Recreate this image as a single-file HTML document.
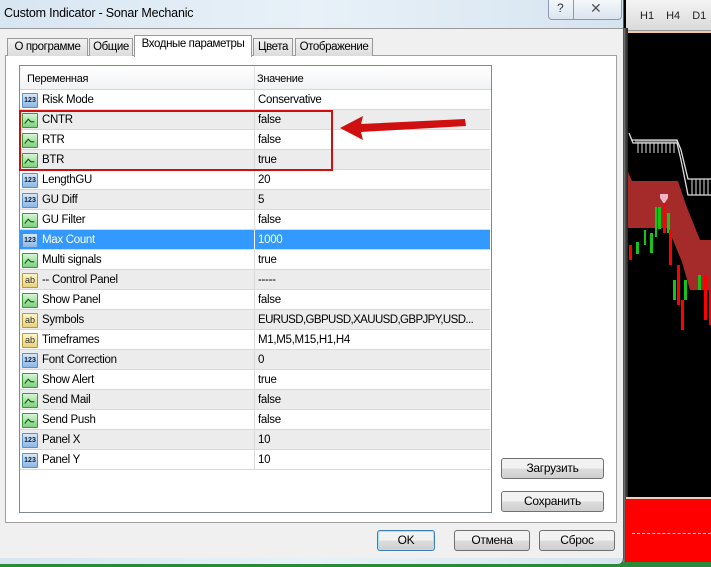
<!DOCTYPE html>
<html><head><meta charset="utf-8"><style>
*{margin:0;padding:0;box-sizing:border-box}
body{width:711px;height:567px;overflow:hidden;position:relative;background:#000;font-family:"Liberation Sans",sans-serif;font-size:12px;color:#000}
.a{position:absolute}
.tab{position:absolute;top:38px;height:18px;border:1px solid #999;border-bottom:none;background:linear-gradient(#f2f2f2,#dcdcdc);font-size:11.5px;line-height:17px;text-align:center;letter-spacing:-0.4px}
.row{position:absolute;left:20px;width:470px;height:20px;border-bottom:1px solid #d9d9d9;line-height:21px;font-size:11.5px;letter-spacing:-0.3px;white-space:nowrap}
.row .n{position:absolute;left:22px;top:0}
.row .v{position:absolute;left:238px;top:0}
.row .d{position:absolute;left:234px;top:0;width:1px;height:20px;background:#d9d9d9}
.g{background:#ececec}
.w{background:#fff}
.sel{background:#3399ff;color:#fff}
.ic{position:absolute;left:2px;top:3px;width:16px;height:15px;border-radius:1px}
.i1{background:linear-gradient(#d8e8f8,#8ab6e6);border:1px solid #5b8fc9;font-size:7px;line-height:13px;color:#123;text-align:center;font-weight:bold;letter-spacing:0}
.i2{background:linear-gradient(#d6f5d6,#7fd07f);border:1px solid #3a9a3a}
.i3{background:linear-gradient(#fff6c8,#e8d27a);border:1px solid #b39a3a;font-size:9px;line-height:13px;text-align:center;color:#333;letter-spacing:0}
.btn{position:absolute;border:1px solid #707070;border-radius:3px;background:linear-gradient(#f2f2f2 50%,#dddddd 50%,#cfcfcf);text-align:center;font-size:12px;letter-spacing:-0.3px}
</style></head><body>
<!-- chart -->
<div class="a" style="left:626px;top:0;width:85px;height:31px;background:linear-gradient(#f4f4f4,#dadada);border-bottom:1px solid #999"></div>
<div class="a" style="left:640px;top:10px;font-size:11px;color:#222;word-spacing:9px">H1 H4 D1</div>
<div class="a" style="left:627px;top:31px;width:84px;height:2px;background:#f7c9a0"></div>
<div class="a" style="left:620px;top:28px;width:8px;height:539px;background:linear-gradient(90deg,#fff,#999 40%,#444 70%,#222)"></div>
<svg class="a" style="left:626px;top:0" width="85" height="497">
<polygon points="2,172 6,181 52,181 60,205 74,240 85,240 85,290 64,290 56,262 42,228 2,228" fill="#a52a2a"/>
<path d="M3,133 L7,143 L51,143 L55,160 L62,195 L85,195" stroke="#ddd" stroke-width="1.3" fill="none"/>
<path d="M5,140 L51,140 L55,150 L62,179 L85,179" stroke="#ddd" stroke-width="1.3" fill="none"/>
<g stroke="#ddd" stroke-width="1"><path d="M10,140v3M14,140v3M18,140v3M22,140v3M26,140v3M30,140v3M34,140v3M38,140v3M42,140v3M46,140v3M50,140v3"/>
<path d="M12,140v13M16,140v13M20,140v13M24,140v13M28,140v13M32,140v13M36,140v13M40,140v13M44,140v13M48,140v13M66,179v16M70,179v16M74,179v16M78,179v16M82,179v16"/></g>
<polygon points="34,194 42,194 42,198 38,204 34,198" fill="#f4b3c2"/>
<g fill="#19c219"><rect x="29" y="207" width="2" height="30"/><rect x="32" y="207" width="3" height="22"/><rect x="24" y="233" width="3" height="20"/><rect x="10" y="242" width="3" height="12"/><rect x="18" y="230" width="2" height="15"/><rect x="41" y="213" width="3" height="20"/><rect x="47" y="280" width="3" height="20"/><rect x="72" y="275" width="3" height="15"/><rect x="58" y="280" width="3" height="20"/></g>
<g fill="#f00"><rect x="37" y="203" width="3" height="30"/><rect x="43" y="230" width="3" height="35"/><rect x="51" y="265" width="3" height="40"/><rect x="3" y="245" width="3" height="15"/><rect x="78" y="275" width="3" height="45"/><rect x="83" y="290" width="2" height="35"/><rect x="55" y="300" width="3" height="30"/></g>
</svg>
<div class="a" style="left:626px;top:497px;width:85px;height:2px;background:#f0d0c0"></div>
<div class="a" style="left:626px;top:499px;width:85px;height:64px;background:#f00"></div>
<div class="a" style="left:632px;top:533px;width:79px;border-top:1px dashed #ff0"></div>
<div class="a" style="left:0;top:562px;width:711px;height:5px;background:#2a8a3a"></div>
<!-- dialog -->
<div class="a" style="left:0;top:0;width:624px;height:564px;background:linear-gradient(90deg,#d8e6f2,#e8f1f8 50%,#d6e4f0);border-right:1px solid #555;border-radius:0 0 6px 0"></div>
<div class="a" style="left:4px;top:6px;font-size:12.5px;color:#000;letter-spacing:-0.2px">Custom Indicator - Sonar Mechanic</div>
<div class="a" style="left:548px;top:0;width:74px;height:20px;border:1px solid #8a9bb0;border-top:none;border-radius:0 0 4px 4px;background:linear-gradient(#f4f8fb,#dbe5ef)"></div>
<div class="a" style="left:573px;top:0;width:1px;height:20px;background:#8a9bb0"></div>
<div class="a" style="left:557px;top:1px;font-size:12px;color:#333">?</div>
<div class="a" style="left:590px;top:0px;font-size:14px;color:#555">✕</div>
<div class="a" style="left:0;top:28px;width:623px;height:530px;background:#f0f0f0;border-top:1px solid #999"></div>
<div class="a" style="left:5px;top:55px;width:612px;height:468px;background:#fff;border:1px solid #a0a0a0"></div>
<div class="tab" style="left:7px;width:81px">О программе</div>
<div class="tab" style="left:89px;width:44px">Общие</div>
<div class="tab" style="left:134px;top:35px;width:118px;height:22px;background:#fff;border-color:#999;z-index:2">Входные параметры</div>
<div class="tab" style="left:253px;width:40px">Цвета</div>
<div class="tab" style="left:295px;width:78px">Отображение</div>
<div class="a" style="left:19px;top:65px;width:473px;height:448px;border:1px solid #828790;background:#fff"></div>
<div class="a" style="left:20px;top:66px;width:471px;height:24px;background:linear-gradient(#fff,#f1f2f4);border-bottom:1px solid #d5d5d5;font-size:11px;line-height:26px;letter-spacing:-0.3px"><span style="position:absolute;left:7px">Переменная</span><span style="position:absolute;left:237px">Значение</span><span style="position:absolute;left:234px;top:0;width:1px;height:24px;background:#e3e3e3"></span></div>

<svg width="0" height="0" style="position:absolute"><defs><symbol id="ck" viewBox="0 0 16 15"><path d="M2,11 L6,6 L9,9 L13,9" stroke="#0a5a0a" stroke-width="1.3" fill="none"/></symbol></defs></svg>

<div class="row w" style="top:90px"><div class="ic i1">123</div><span class="n">Risk Mode</span><span class="d"></span><span class="v">Conservative</span></div>
<div class="row g" style="top:110px"><div class="ic i2"><svg width="14" height="13"><use href="#ck"/></svg></div><span class="n">CNTR</span><span class="d"></span><span class="v">false</span></div>
<div class="row w" style="top:130px"><div class="ic i2"><svg width="14" height="13"><use href="#ck"/></svg></div><span class="n">RTR</span><span class="d"></span><span class="v">false</span></div>
<div class="row g" style="top:150px"><div class="ic i2"><svg width="14" height="13"><use href="#ck"/></svg></div><span class="n">BTR</span><span class="d"></span><span class="v">true</span></div>
<div class="row w" style="top:170px"><div class="ic i1">123</div><span class="n">LengthGU</span><span class="d"></span><span class="v">20</span></div>
<div class="row g" style="top:190px"><div class="ic i1">123</div><span class="n">GU Diff</span><span class="d"></span><span class="v">5</span></div>
<div class="row w" style="top:210px"><div class="ic i2"><svg width="14" height="13"><use href="#ck"/></svg></div><span class="n">GU Filter</span><span class="d"></span><span class="v">false</span></div>
<div class="row sel" style="top:230px"><div class="ic i1">123</div><span class="n">Max Count</span><span class="d" style="background:#fff"></span><span class="v">1000</span></div>
<div class="row w" style="top:250px"><div class="ic i2"><svg width="14" height="13"><use href="#ck"/></svg></div><span class="n">Multi signals</span><span class="d"></span><span class="v">true</span></div>
<div class="row g" style="top:270px"><div class="ic i3">ab</div><span class="n">-- Control Panel</span><span class="d"></span><span class="v">-----</span></div>
<div class="row w" style="top:290px"><div class="ic i2"><svg width="14" height="13"><use href="#ck"/></svg></div><span class="n">Show Panel</span><span class="d"></span><span class="v">false</span></div>
<div class="row g" style="top:310px"><div class="ic i3">ab</div><span class="n">Symbols</span><span class="d"></span><span class="v" style="letter-spacing:-0.6px">EURUSD,GBPUSD,XAUUSD,GBPJPY,USD...</span></div>
<div class="row w" style="top:330px"><div class="ic i3">ab</div><span class="n">Timeframes</span><span class="d"></span><span class="v">M1,M5,M15,H1,H4</span></div>
<div class="row g" style="top:350px"><div class="ic i1">123</div><span class="n">Font Correction</span><span class="d"></span><span class="v">0</span></div>
<div class="row w" style="top:370px"><div class="ic i2"><svg width="14" height="13"><use href="#ck"/></svg></div><span class="n">Show Alert</span><span class="d"></span><span class="v">true</span></div>
<div class="row g" style="top:390px"><div class="ic i2"><svg width="14" height="13"><use href="#ck"/></svg></div><span class="n">Send Mail</span><span class="d"></span><span class="v">false</span></div>
<div class="row w" style="top:410px"><div class="ic i2"><svg width="14" height="13"><use href="#ck"/></svg></div><span class="n">Send Push</span><span class="d"></span><span class="v">false</span></div>
<div class="row g" style="top:430px"><div class="ic i1">123</div><span class="n">Panel X</span><span class="d"></span><span class="v">10</span></div>
<div class="row w" style="top:450px"><div class="ic i1">123</div><span class="n">Panel Y</span><span class="d"></span><span class="v">10</span></div>

<div class="a" style="left:19px;top:110px;width:314px;height:61px;border:2px solid #d01010"></div>
<svg class="a" style="left:335px;top:112px" width="135" height="32"><polygon points="5,16 28,4 26,12 130,7 131,14 26,20 28,28" fill="#d01010"/></svg>

<div class="btn" style="left:501px;top:458px;width:103px;height:21px;line-height:19px">Загрузить</div>
<div class="btn" style="left:501px;top:491px;width:103px;height:21px;line-height:19px">Сохранить</div>
<div class="btn" style="left:377px;top:530px;width:58px;height:21px;line-height:19px;border-color:#3c7fb1;box-shadow:inset 0 0 0 1px #a6e1f6">OK</div>
<div class="btn" style="left:454px;top:530px;width:76px;height:21px;line-height:19px">Отмена</div>
<div class="btn" style="left:539px;top:530px;width:76px;height:21px;line-height:19px">Сброс</div>
</body></html>
